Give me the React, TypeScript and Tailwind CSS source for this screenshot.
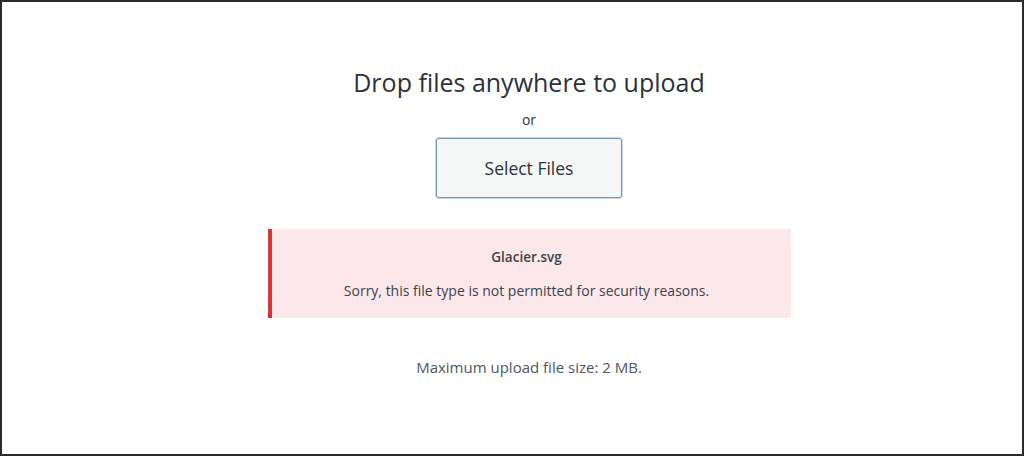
import React from 'react';

export default function App() {
  return (
    <div
      className="w-[1024px] h-[456px] bg-white border-2 border-[#2b2b2b] pl-[34px] flex flex-col items-center text-[#3c434a]"
      style={{ fontFamily: '"Open Sans", "Noto Sans", sans-serif' }}
    >
      <h2 className="mt-[64px] text-[25px] leading-[32px] text-[#2c3338]">
        Drop files anywhere to upload
      </h2>
      <p className="mt-[12px] text-[14px] leading-[20px] text-[#2c3338]">or</p>
      <button className="mt-[8px] w-[186px] h-[60px] rounded-[3px] border border-[#7896b8] bg-[#f6f7f7] shadow-[0_0_0_1px_#c7d5e4] text-[17.5px] text-[#2c3338]">
        Select Files
      </button>

      {/* error notice */}
      <div className="mt-[31px] w-[523px] h-[89px] bg-[#fce8ea] border-l-4 border-[#d63638] pr-[9px] flex flex-col items-center justify-center">
        <p className="text-[13.5px] leading-[20px] font-semibold text-[#3c434a]">Glacier.svg</p>
        <p className="mt-[14px] text-[14px] leading-[20px] text-[#3c434a]">
          Sorry, this file type is not permitted for security reasons.
        </p>
      </div>

      <p className="mt-[39px] text-[15px] leading-[20px] text-[#50575e]">
        Maximum upload file size: 2 MB.
      </p>
    </div>
  );
}
